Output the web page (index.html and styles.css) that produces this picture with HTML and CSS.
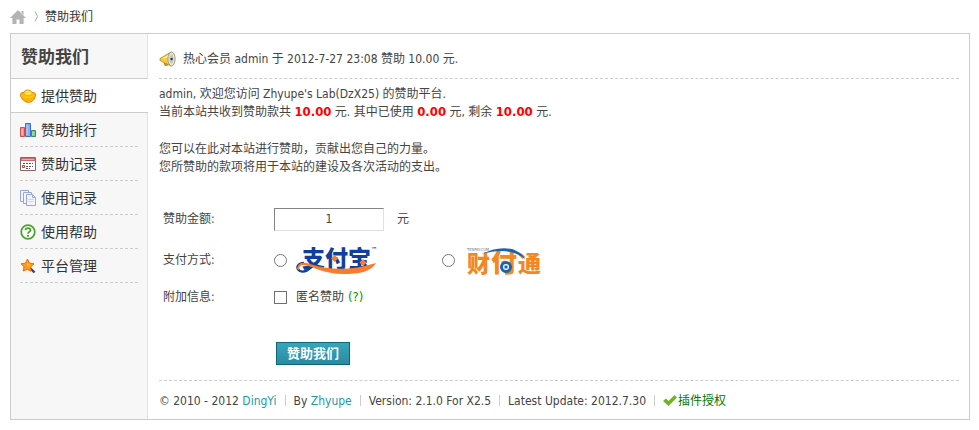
FILE: index.html
```html
<!DOCTYPE html>
<html lang="zh-CN">
<head>
  <meta charset="UTF-8" />
  <meta name="viewport" content="width=device-width, initial-scale=1.0"/>
  <title>赞助我们</title>
  <link rel="stylesheet" href="styles.css">
</head>
<body>
  <nav class="crumb">
    <a href="#" aria-label="首页">
      <svg class="home" width="16" height="14" viewBox="0 0 16 14">
        <path d="M8 0 16 8H13.600V14H9.500V9.500H6.500V14H2.400V8H0Z" fill="#b4b4b4"/>
        <path d="M11.500 1h2v4l-2-2z" fill="#b4b4b4"/>
      </svg>
    </a>
    <svg class="arrow" width="5" height="11" viewBox="0 0 5 11">
      <path d="M1 .5 3.500 5.500 1 10.500" fill="none" stroke="#aaa"/>
    </svg>
    <a href="#">赞助我们</a>
  </nav>

  <div class="container">
    <div class="sidebar">
      <h2 class="sidebar-title">赞助我们</h2>
      <ul class="menu">
        <li class="active"><a href="#">
          <svg width="16" height="16" viewBox="0 0 16 16">
            <path d="M.5 6.500C.5 4.500 2.500 4 4 4.500 4.500 1.200 10.500 1.200 12 4.500c2-.5 3.500.5 3.500 2.500 0 4-4 7.500-7 7.500S.5 11 .5 6.500z" fill="#ffb400" stroke="#e08a00"/>
            <path d="M4.500 5.500c0-4 7-4 7 0 0 2-7 2-7 0z" fill="#ffe14d"/>
            <path d="M2 7c2.500 3 9 3 12 0" fill="none" stroke="#ffd83a"/>
          </svg>提供赞助</a></li>
        <li><a href="#">
          <svg width="16" height="16" viewBox="0 0 16 16">
            <path d="M.5 5.500h4v9h-4z" fill="#f58e8e" stroke="#cf4f4f"/>
            <path d="M5.500 1.500h5v13h-5z" fill="#7fb1f5" stroke="#3b6fca"/>
            <path d="M11.500 8.500h4v6h-4z" fill="#83c98c" stroke="#428a52"/>
            <path d="M7 3v10M2 7v6M13 10v3" stroke="#fff" stroke-opacity=".5"/>
          </svg>赞助排行</a></li>
        <li><a href="#">
          <svg width="16" height="16" viewBox="0 0 16 16">
            <path d="M.5 1.500h15v13H.5z" fill="#fff" stroke="#8f6464"/>
            <path d="M1 2h14v3H1z" fill="#cd6c6c"/>
            <path d="M2 3.500h12" stroke="#eeb0b0"/>
            <path d="M3 7.500h10M6 10.500h7M6 12.500h4" stroke="#555" stroke-dasharray="2 1"/>
            <path d="M2.500 9.500h2v2h-2z" fill="#fff" stroke="#cf3a3a"/>
          </svg>赞助记录</a></li>
        <li><a href="#">
          <svg width="16" height="16" viewBox="0 0 16 16">
            <g fill="#f4f6ff" stroke="#98a6dc">
              <path d="M.5.5h8v11h-8z"/>
              <path d="M3.500 2.500h8v11h-8z"/>
              <path d="M6.500 4.500h6l3 3v8h-9z"/>
              <path d="M12.500 4.500v3h3" fill="none"/>
            </g>
            <path d="M8.500 9.500h5M8.500 11.500h5" stroke="#c9d2f2"/>
          </svg>使用记录</a></li>
        <li><a href="#">
          <svg width="16" height="16" viewBox="0 0 16 16">
            <circle cx="8" cy="8" r="6.800" fill="#fff" stroke="#4aa52f" stroke-width="1.800"/>
            <path d="M5.500 6.300C5.500 3.300 10.500 3.300 10.500 6.200 10.500 7.800 8 7.800 8 9.800" fill="none" stroke="#4aa52f" stroke-width="1.800"/>
            <path d="M7 11h2v1.800H7z" fill="#4aa52f"/>
          </svg>使用帮助</a></li>
        <li><a href="#">
          <svg width="16" height="16" viewBox="0 0 16 16">
            <path d="M10 10 14.500 14.500" stroke="#234a78" stroke-width="2.400"/>
            <path d="M7.500 1 9.300 5 14 5.800 10.600 9 11 13.200 7.200 11.300 3.200 13 4 8.700 1 5.800 5.400 5.200z" fill="#ff9a1f" stroke="#e67300"/>
            <path d="M7.500 3.500 8.500 6.500 11 7 7 8z" fill="#ffc35c"/>
          </svg>平台管理</a></li>
      </ul>
    </div>

    <div class="main">
      <div class="notice">
        <svg width="17" height="16" viewBox="0 0 17 16">
          <path d="M4.500 9.500 6 14.500 9 14 8 10z" fill="#d9a423" stroke="#9a7420" stroke-width=".8"/>
          <path d="M1 7.500 12 1v14L1 9.500z" fill="#f5cf3e" stroke="#a98526" stroke-width=".8"/>
          <path d="M3 7.500 10 3.500v3z" fill="#fff3a8"/>
          <ellipse cx="12.500" cy="8" rx="3.600" ry="7" fill="#eee6c4" stroke="#a39a78"/>
          <ellipse cx="12.500" cy="8" rx="1.900" ry="4.600" fill="#c4c8d0"/>
          <circle cx="12.600" cy="8" r="1.200" fill="#333"/>
        </svg>
        <span>热心会员 admin 于 2012-7-27 23:08 赞助 10.00 元.</span>
      </div>

      <div class="intro">
        <p>admin, 欢迎您访问 Zhyupe's Lab(DzX25) 的赞助平台.<br>
        当前本站共收到赞助款共 <strong>10.00</strong> 元. 其中已使用 <strong>0.00</strong> 元, 剩余 <strong>10.00</strong> 元.</p>
        <p>您可以在此对本站进行赞助，贡献出您自己的力量。<br>
        您所赞助的款项将用于本站的建设及各次活动的支出。</p>
      </div>

      <form class="form">
        <div class="row row-amount">
          <label class="name" for="amount">赞助金额:</label>
          <input class="px" type="text" id="amount" value="1">
          <span class="unit">元</span>
        </div>
        <div class="row row-pay">
          <span class="name">支付方式:</span>
          <label class="pay">
            <input type="radio" name="pay" value="alipay" aria-label="支付宝">
            <svg width="86" height="40" viewBox="0 -4 86 40">
              <text class="logo-text alipay-text" x="6" y="23">支付宝</text>
              <path d="M19 19C14 26 8 29 4 27-1 24 2 19 8 19" fill="none" stroke="#10409c" stroke-width="2.400"/>
              <path d="M1 25C2 18 8 18 14 20 32 26 55 27 80 19 75 28 62 30 48 30 28 30 16 22 8 21 4 21 3 23 3 26z" fill="#fb7a2c"/>
              <path d="M38.500 11l3.500 3.500L38.500 18 35 14.500zM67 15l3.500 3.500L67 22l-3.500-3.500z" fill="#fb7a2c"/>
              <text class="logo-tm" x="75" y="8">™</text>
            </svg>
          </label>
          <label class="pay">
            <input type="radio" name="pay" value="tenpay" aria-label="财付通">
            <svg width="82" height="40" viewBox="0 -4 82 40">
              <text class="logo-text tenpay-text" x="3" y="28">财</text>
              <text class="logo-text tenpay-text tenpay-big" x="27" y="28">付</text>
              <text class="logo-text tenpay-text" x="54" y="28">通</text>
              <path d="M18 10C32 2 54 1 61 15 50 6 35 5 18 10z" fill="#1c63ac"/>
              <circle cx="42" cy="23" r="4.500" fill="#fff" stroke="#1c63ac" stroke-width="3"/>
              <path d="M40.500 21.500h3v3h-3z" fill="#1c63ac"/>
              <text class="logo-small" x="3" y="7">TENPAY.COM</text>
            </svg>
          </label>
        </div>
        <div class="row row-extra">
          <span class="name">附加信息:</span>
          <input class="pc" type="checkbox" id="anonymous">
          <label class="anonymous" for="anonymous">匿名赞助</label>
          <a class="help" href="#">(?)</a>
        </div>
        <button class="btn" type="button">赞助我们</button>
      </form>

      <div class="footer">
        <span>© 2010 - 2012 <a href="#">DingYi</a></span>
        <span>By <a href="#">Zhyupe</a></span>
        <span>Version: 2.1.0 For X2.5</span>
        <span>Latest Update: 2012.7.30</span>
        <a class="license" href="#">
          <svg width="14" height="12" viewBox="0 0 14 12">
            <path d="M0 6 3 3.500 5.500 6 11.500 0 14 2.500 5.500 11z" fill="#6fb51b"/>
          </svg>插件授权</a>
      </div>
    </div>
  </div>
</body>
</html>
```
FILE: styles.css
```css
* {
    box-sizing: border-box;
}
body {
    margin: 0;
    padding: 0 9px 10px 10px;
    background: #fff;
    color: #444;
    font: 12px/18px "DejaVu Sans Condensed", "Noto Sans CJK SC", sans-serif;
}
a {
    color: #333;
    text-decoration: none;
}
p, h2, ul {
    margin: 0;
    padding: 0;
}
svg {
    flex: none;
    display: block;
}
.crumb {
    display: flex;
    align-items: center;
    height: 33px;
}
.arrow {
    margin: 0 6px 0 8px;
}
.container {
    display: flex;
    border: 1px solid #ccc;
}

/* sidebar */
.sidebar {
    width: 137px;
    flex: none;
    background: #f7f7f7;
    border-right: 1px solid #e3e3e3;
}
.sidebar-title {
    height: 45px;
    padding-left: 10px;
    border-bottom: 1px solid #ccc;
    font-size: 17px;
    line-height: 46px;
}
.menu {
    list-style: none;
}
.menu li {
    padding: 0 9px;
}
.menu a {
    display: flex;
    align-items: center;
    gap: 5px;
    height: 34px;
    border-bottom: 1px dashed #ccc;
    font-size: 14px;
}
.menu .active {
    margin-right: -1px;
    background: #fff;
    border-bottom: 1px solid #ccc;
}
.menu .active a {
    height: 33px;
    border: 0;
}

/* content */
.main {
    flex: 1;
    padding: 0 10px 0 11px;
}
.notice {
    display: flex;
    align-items: center;
    gap: 7px;
    height: 45px;
    padding-top: 6px;
    border-bottom: 1px dashed #ccc;
}
.intro {
    padding-top: 6px;
}
.intro p + p {
    margin-top: 19px;
}
.intro strong {
    color: #f00;
    font-size: 13px;
    line-height: 1;
}
.form {
    padding: 24px 0 15px 4px;
}
.row {
    display: flex;
    align-items: center;
}
.row-amount {
    height: 38px;
}
.row-pay {
    height: 44px;
}
.row-extra {
    height: 30px;
}
.name {
    width: 111px;
}
.row input {
    margin: 0;
}
.px {
    width: 110px;
    height: 23px;
    border: 1px solid;
    border-color: #848484 #e0e0e0 #e0e0e0 #848484;
    color: #444;
    font: inherit;
    text-align: center;
}
.pc {
    width: 13px;
    height: 13px;
    appearance: none;
    border: 1px solid #707070;
    background: #fff;
}
.pc:checked {
    background: #2a8aa3;
}
.unit {
    margin-left: 13px;
}
.pay {
    display: flex;
    align-items: center;
    gap: 9px;
    width: 168px;
}
.logo-text {
    font-weight: 900;
}
.alipay-text {
    fill: #10409c;
    font-size: 23px;
}
.tenpay-text {
    fill: #f5871f;
    font-size: 23px;
}
.tenpay-big {
    font-size: 26px;
}
.logo-tm {
    fill: #222;
    font-size: 7px;
}
.logo-small {
    fill: #777;
    font-size: 4px;
}
.anonymous {
    margin: 0 4px 0 9px;
}
.row .help {
    color: #090;
    font-size: 13px;
}
.btn {
    display: block;
    height: 23px;
    margin: 30px 0 0 113px;
    padding: 0 10px;
    border: 1px solid #0d6873;
    background: linear-gradient(#35a6bb, #2a8aa3);
    color: #fff;
    font: bold 13px/20px "DejaVu Sans Condensed", "Noto Sans CJK SC", sans-serif;
    cursor: pointer;
}

/* footer */
.footer {
    display: flex;
    align-items: center;
    height: 39px;
    border-top: 1px dashed #ccc;
    padding-top: 2px;
}
.footer span::after {
    content: "";
    display: inline-block;
    width: 1px;
    height: 11px;
    margin: 0 8px;
    background: #ccc;
    vertical-align: -1px;
}
.footer span a {
    color: #2299a8;
}
.footer .license {
    display: flex;
    align-items: center;
    gap: 1px;
    color: #070;
}
```
